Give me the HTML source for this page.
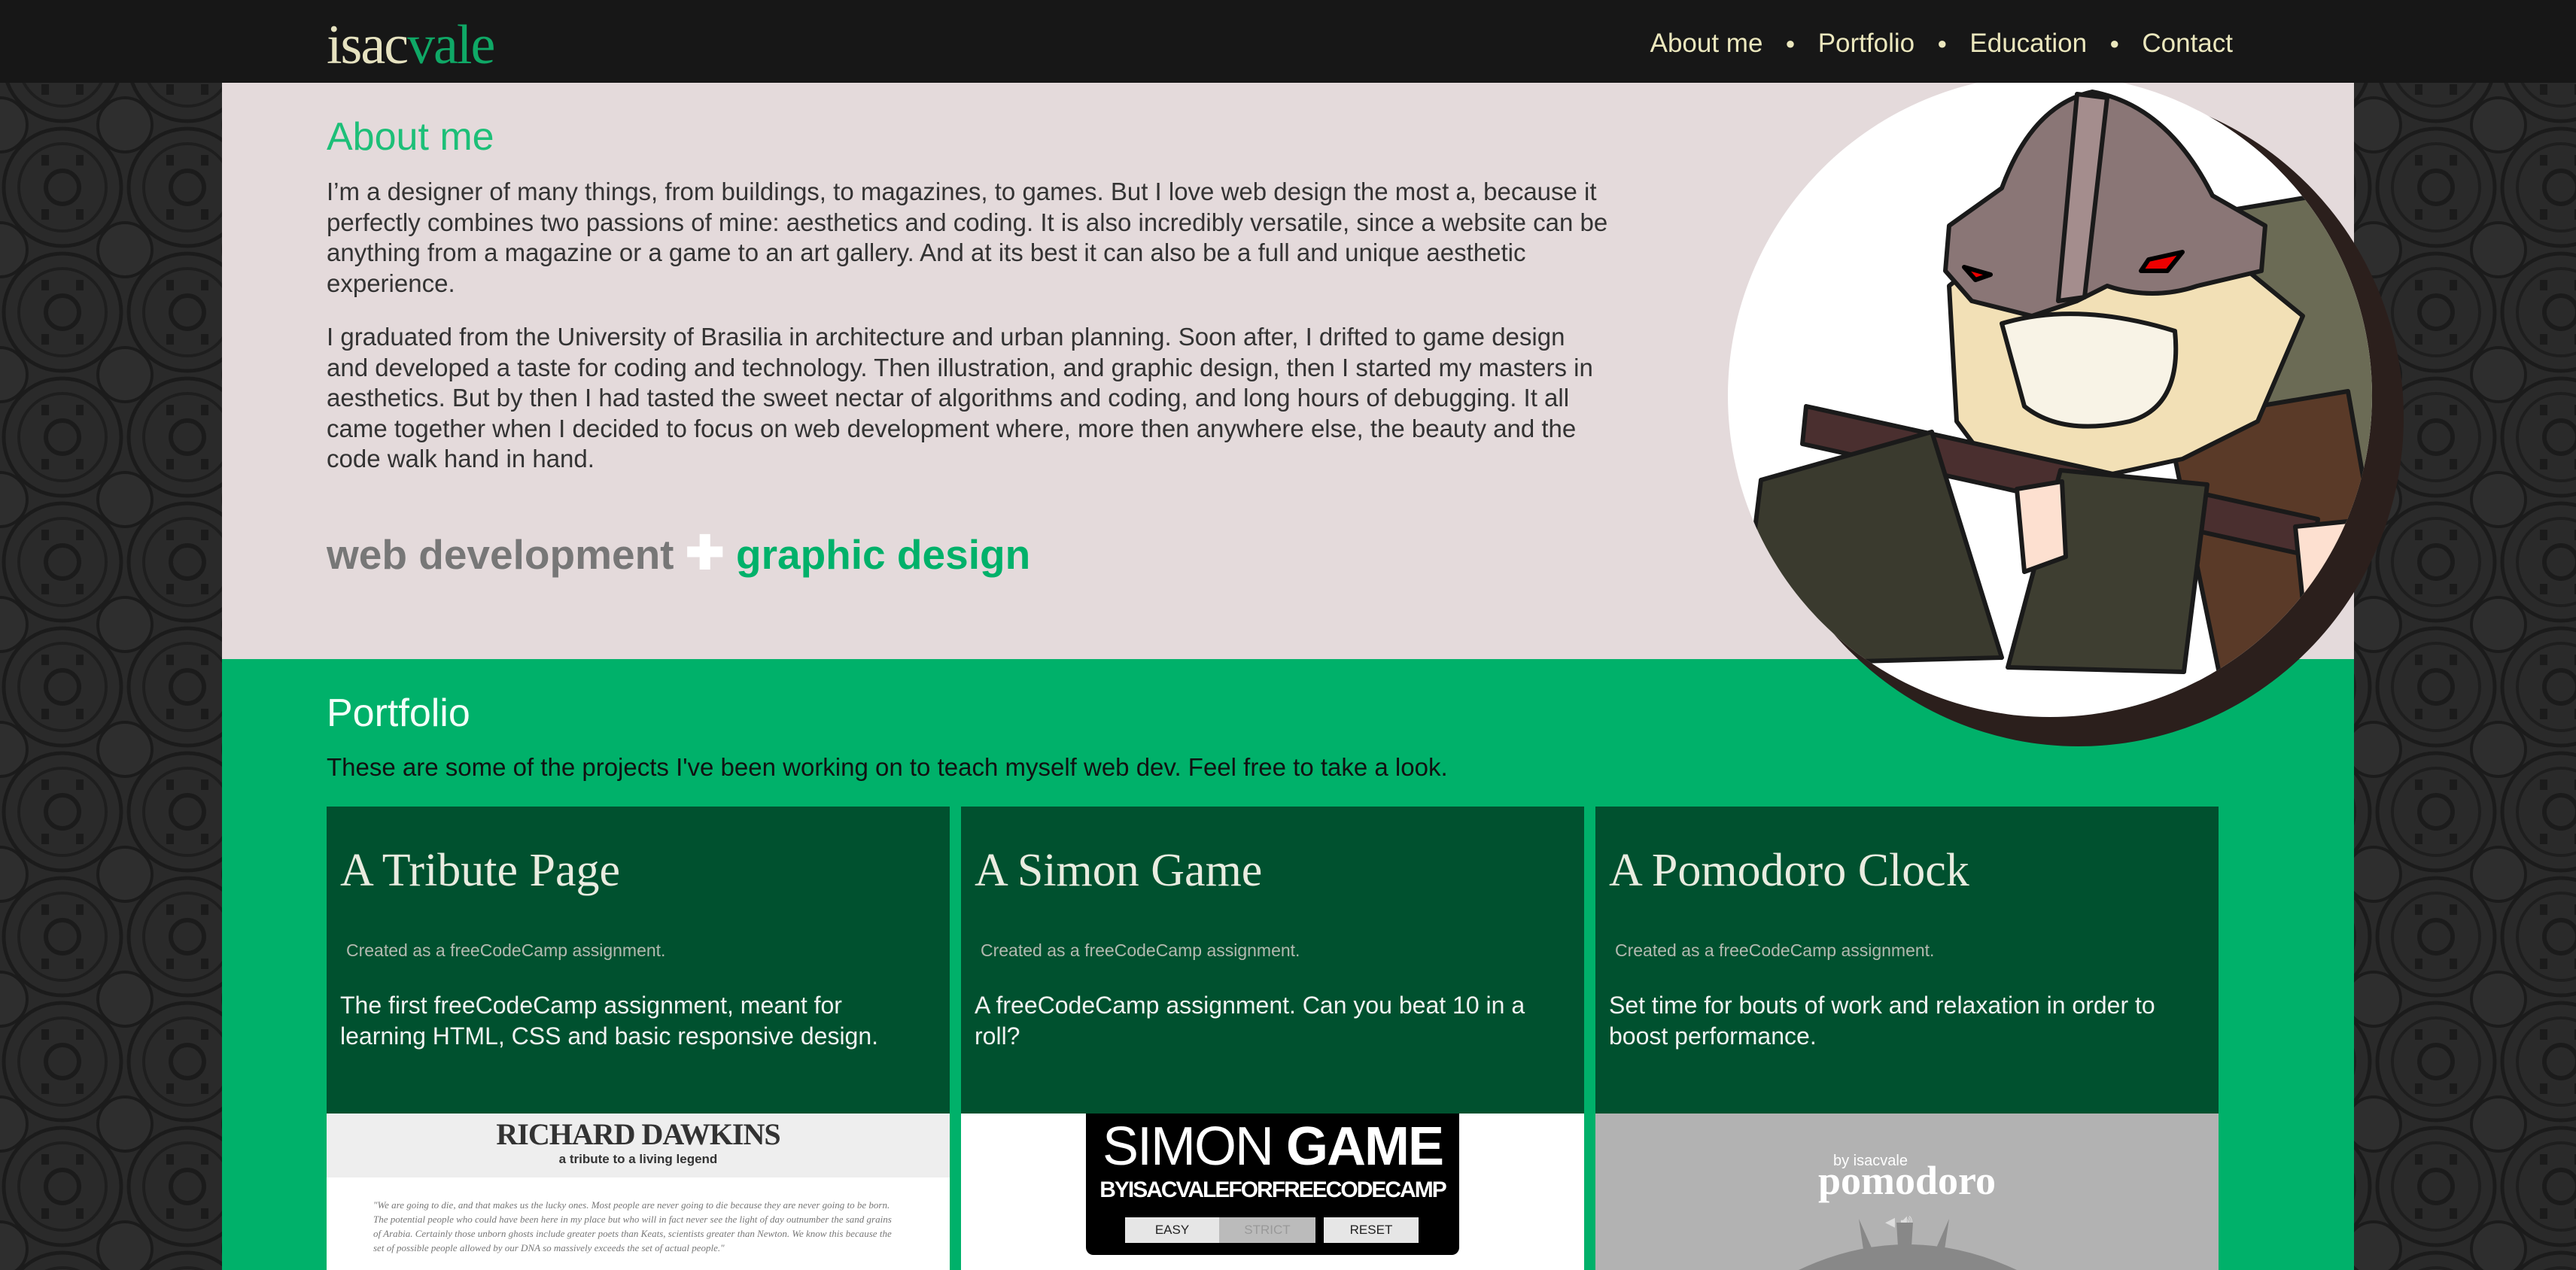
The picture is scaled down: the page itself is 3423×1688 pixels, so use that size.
<!DOCTYPE html>
<html><head><meta charset="utf-8">
<style>
*{margin:0;padding:0;box-sizing:border-box}
body{width:3423px;height:1688px;overflow:hidden;background:#282828;font-family:"Liberation Sans",sans-serif;position:relative}
#bg{position:absolute;left:0;top:0}
.nav{position:absolute;left:0;top:0;width:3423px;height:110px;background:#171717;z-index:3}
.logo{position:absolute;left:434px;top:18px;font-family:"Liberation Serif",serif;font-size:74px;letter-spacing:-2px;color:#e6e2c0}
.logo span{color:#0fa866}
.menu{position:absolute;right:456px;top:38px;font-size:35px;color:#ebe7bd;white-space:nowrap}
.menu b{font-weight:normal;display:inline-block;margin:0 30px;font-size:22px;position:relative;top:-4px}
.about{position:absolute;left:295px;top:110px;width:2833px;height:766px;background:#e4dadb}
.port{position:absolute;left:295px;top:876px;width:2833px;height:812px;background:#00b16a}
.h{position:absolute;left:139px;font-size:52px;font-weight:300;}
.p{position:absolute;left:139px;font-size:33px;line-height:40.5px;color:#333;white-space:nowrap}
.tag{position:absolute;left:139px;top:588px;font-size:55px;font-weight:bold;color:#777;white-space:nowrap}
.card{position:absolute;top:196px;width:828px;height:616px;background:#00512f;overflow:hidden}
.ct{position:absolute;left:18px;top:50px;font-family:"Liberation Serif",serif;font-size:62px;color:#e9ece0;white-space:nowrap}
.cs{position:absolute;left:26px;top:178px;font-size:23px;color:#b3b9b0;white-space:nowrap}
.cd{position:absolute;left:18px;top:244px;font-size:32px;line-height:41px;color:#f2f2f2;white-space:nowrap}
.img{position:absolute;left:0;top:408px;width:828px;height:208px}
</style></head><body>
<svg id="bg" width="3423" height="1688">
<defs><pattern id="pt" width="166" height="166" patternUnits="userSpaceOnUse">
<rect width="166" height="166" fill="#2a2a2a"/>
<circle cx="83" cy="83" r="78" fill="none" stroke="#1b1b1b" stroke-width="5"/>
<circle cx="83" cy="83" r="58" fill="none" stroke="#1e1e1e" stroke-width="4"/>
<circle cx="83" cy="83" r="22" fill="none" stroke="#1b1b1b" stroke-width="6"/>
<circle cx="0" cy="0" r="36" fill="#2e2e2e" stroke="#1b1b1b" stroke-width="4"/>
<circle cx="166" cy="0" r="36" fill="#2e2e2e" stroke="#1b1b1b" stroke-width="4"/>
<circle cx="0" cy="166" r="36" fill="#2e2e2e" stroke="#1b1b1b" stroke-width="4"/>
<circle cx="166" cy="166" r="36" fill="#2e2e2e" stroke="#1b1b1b" stroke-width="4"/>
<path d="M55 40h10v14h-10zM101 40h10v14h-10zM55 112h10v14h-10zM101 112h10v14h-10z" fill="#1b1b1b"/>
</pattern></defs>
<rect width="3423" height="1688" fill="url(#pt)"/>
</svg>

<div class="nav">
 <div class="logo">isac<span>vale</span></div>
 <div class="menu">About me<b>●</b>Portfolio<b>●</b>Education<b>●</b>Contact</div>
</div>

<div class="about">
 <div class="h" style="top:42px;color:#1dbf78">About me</div>
 <div class="p" style="top:125px">I’m a designer of many things, from buildings, to magazines, to games. But I love web design the most a, because it<br>perfectly combines two passions of mine: aesthetics and coding. It is also incredibly versatile, since a website can be<br>anything from a magazine or a game to an art gallery. And at its best it can also be a full and unique aesthetic<br>experience.</div>
 <div class="p" style="top:318px">I graduated from the University of Brasilia in architecture and urban planning. Soon after, I drifted to game design<br>and developed a taste for coding and technology. Then illustration, and graphic design, then I started my masters in<br>aesthetics. But by then I had tasted the sweet nectar of algorithms and coding, and long hours of debugging. It all<br>came together when I decided to focus on web development where, more then anywhere else, the beauty and the<br>code walk hand in hand.</div>
 <div class="tag">web development <span style="color:#fff;font-size:62px">✚</span> <span style="color:#00b16a">graphic design</span></div>
</div>

<div class="port">
 <div class="h" style="top:42px;color:#f2fff8">Portfolio</div>
 <div class="p" style="top:124px;color:#111">These are some of the projects I've been working on to teach myself web dev. Feel free to take a look.</div>

 <div class="card" style="left:139px">
  <div class="ct">A Tribute Page</div>
  <div class="cs">Created as a freeCodeCamp assignment.</div>
  <div class="cd">The first freeCodeCamp assignment, meant for<br>learning HTML, CSS and basic responsive design.</div>
  <div class="img" style="background:#fff">
   <div style="position:absolute;left:0;top:0;width:828px;height:85px;background:#eee;text-align:center">
    <div style="font-family:'Liberation Serif',serif;font-weight:bold;font-size:40px;color:#333;padding-top:4px;letter-spacing:-1px">RICHARD DAWKINS</div>
    <div style="font-size:17px;color:#333;font-weight:bold">a tribute to a living legend</div>
   </div>
   <div style="position:absolute;left:62px;top:112px;width:700px;font-family:'Liberation Serif',serif;font-style:italic;font-size:13px;line-height:19px;color:#777">"We are going to die, and that makes us the lucky ones. Most people are never going to die because they are never going to be born. The potential people who could have been here in my place but who will in fact never see the light of day outnumber the sand grains of Arabia. Certainly those unborn ghosts include greater poets than Keats, scientists greater than Newton. We know this because the set of possible people allowed by our DNA so massively exceeds the set of actual people."</div>
  </div>
 </div>

 <div class="card" style="left:982px">
  <div class="ct">A Simon Game</div>
  <div class="cs">Created as a freeCodeCamp assignment.</div>
  <div class="cd">A freeCodeCamp assignment. Can you beat 10 in a<br>roll?</div>
  <div class="img" style="background:#fff">
   <div style="position:absolute;left:166px;top:0;width:496px;height:188px;background:#000;border-radius:0 0 10px 10px;text-align:center;color:#fff">
    <div style="font-size:72px;font-weight:bold;letter-spacing:-2px;line-height:80px;padding-top:4px"><span style="font-weight:normal">SIMON</span> GAME</div>
    <div style="font-size:30px;font-weight:bold;letter-spacing:-2px;line-height:36px">BYISACVALEFORFREECODECAMP</div>
    <div style="position:absolute;left:52px;top:138px;width:125px;height:34px;background:#e6e6e6;color:#222;font-size:17px;line-height:34px">EASY</div>
    <div style="position:absolute;left:177px;top:138px;width:128px;height:34px;background:#bbb;color:#999;font-size:17px;line-height:34px">STRICT</div>
    <div style="position:absolute;left:316px;top:138px;width:126px;height:34px;background:#e6e6e6;color:#222;font-size:17px;line-height:34px">RESET</div>
   </div>
  </div>
 </div>

 <div class="card" style="left:1825px">
  <div class="ct">A Pomodoro Clock</div>
  <div class="cs">Created as a freeCodeCamp assignment.</div>
  <div class="cd">Set time for bouts of work and relaxation in order to<br>boost performance.</div>
  <div class="img" style="background:#b2b2b2">
   <div style="position:absolute;left:316px;top:52px;font-size:20px;color:#fff">by isacvale</div>
   <div style="position:absolute;left:0;width:828px;top:58px;text-align:center;font-family:'Liberation Serif',serif;font-weight:bold;font-size:54px;color:#fff">pomodoro</div>
   <div style="position:absolute;left:385px;top:128px;font-size:26px;color:#ddd">◂ 🔊︎</div>
   <svg style="position:absolute;left:0;top:0" width="828" height="208"><path d="M270 208 Q414 140 560 208Z" fill="#888"/><path d="M400 145h22l-4 63h-14z M350 140 l30 68h-20z M470 140 l-30 68h20z" fill="#888"/></svg>
  </div>
 </div>
</div>

<svg style="position:absolute;left:0;top:0;z-index:2" width="3423" height="1688">
 <defs><clipPath id="cc"><ellipse cx="2724" cy="526" rx="428" ry="427"/></clipPath></defs>
 <ellipse cx="2762" cy="555" rx="432" ry="437" fill="#2b1f1c"/>
 <ellipse cx="2724" cy="526" rx="428" ry="427" fill="#fff"/>
 <g clip-path="url(#cc)" stroke="#1a1a1a" stroke-width="6" stroke-linejoin="round">
  <path d="M2900 290 L3080 260 L3200 420 L3200 700 L3000 700 L2900 500Z" fill="#6b6b55"/>
  <path d="M2880 560 L3120 520 L3180 860 L2950 900Z" fill="#5a3a28"/>
  <path d="M2590 380 L2600 560 L2660 640 L2760 640 L2900 610 L3000 560 L3060 420 L2950 330 L2640 340Z" fill="#f2e0b6"/>
  <path d="M2660 430 Q2760 400 2890 440 Q2900 540 2830 560 Q2740 580 2690 540Z" fill="#f8f3e6"/>
  <path d="M2660 250 Q2700 140 2780 122 Q2880 140 2940 260 L3010 300 L3005 360 L2920 380 Q2860 400 2800 380 L2760 400 L2700 420 L2620 400 L2585 360 L2590 300 Z" fill="#8a7676"/>
  <path d="M2760 125 L2800 130 L2770 395 L2735 400Z" fill="#a48d8d"/>
  <path d="M2610 355 L2645 365 L2625 372Z M2855 345 L2900 335 L2880 360 L2845 360Z" fill="#e00" stroke="#000"/>
  <path d="M2400 540 L3080 690 L3075 740 L2395 590Z" fill="#4a2f2f"/>
  <path d="M2340 638 L2567 574 L2660 874 L2434 880 L2320 800Z" fill="#3a3a2e"/>
  <path d="M2738 625 L2933 644 L2902 893 L2668 887Z" fill="#3e3e31"/>
  <path d="M2680 650 L2740 640 L2745 740 L2690 760Z" fill="#fde0d0"/>
  <path d="M3050 700 L3150 690 L3150 800 L3060 800Z" fill="#fde0d0"/>
 </g>
</svg>
</body></html>
